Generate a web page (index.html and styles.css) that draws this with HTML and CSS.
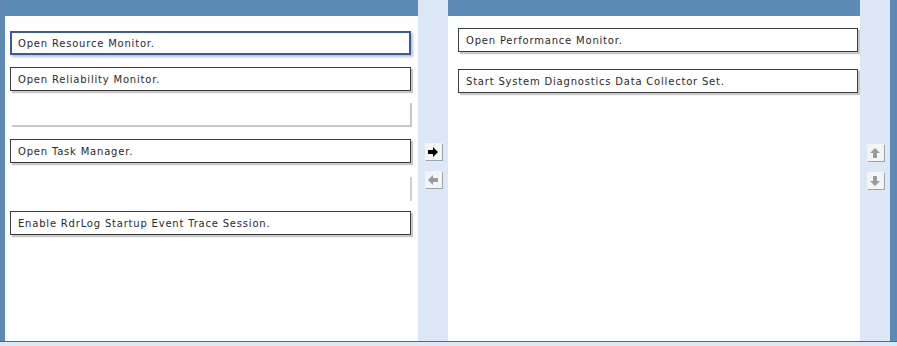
FILE: index.html
```html
<!DOCTYPE html>
<html>
<head>
<meta charset="utf-8">
<link rel="stylesheet" href="styles.css">
</head>
<body>
<div class="frame">
  <div class="cols">
    <div class="panel left">
      <div class="head"></div>
      <div class="list left-list">
        <div class="item focused">Open Resource Monitor.</div>
        <div class="item">Open Reliability Monitor.</div>
        <div class="item ghost"></div>
        <div class="item">Open Task Manager.</div>
        <div class="item ghost2"></div>
        <div class="item">Enable RdrLog Startup Event Trace Session.</div>
      </div>
    </div>
    <div class="gutter mid">
      <div class="btn">
        <svg width="12" height="12" viewBox="0 0 12 12"><path d="M1 4h5V1l5 5-5 5V8H1z" fill="#000"/></svg>
      </div>
      <div class="btn">
        <svg width="12" height="12" viewBox="0 0 12 12"><path d="M11 4H6V1L1 6l5 5V8h5z" fill="#9a9a9a"/></svg>
      </div>
    </div>
    <div class="panel right">
      <div class="head"></div>
      <div class="list right-list">
        <div class="item">Open Performance Monitor.</div>
        <div class="item">Start System Diagnostics Data Collector Set.</div>
      </div>
    </div>
    <div class="gutter side">
      <div class="btn">
        <svg width="12" height="12" viewBox="0 0 12 12"><path d="M4 11V6H1l5-5 5 5H8v5z" fill="#9a9a9a"/></svg>
      </div>
      <div class="btn">
        <svg width="12" height="12" viewBox="0 0 12 12"><path d="M4 1v5H1l5 5 5-5H8V1z" fill="#9a9a9a"/></svg>
      </div>
    </div>
  </div>
  <div class="foot"></div>
</div>
</body>
</html>
```
FILE: styles.css
```css
html, body {
  margin: 0;
  padding: 0;
  background: #dce8f5;
}
.frame {
  width: 897px;
  height: 346px;
  display: flex;
  flex-direction: column;
  font-family: "DejaVu Sans", Verdana, sans-serif;
  font-size: 10px;
  letter-spacing: 0.8px;
  color: #2a2a2a;
}
.cols {
  display: flex;
  height: 341px;
  border-left: 5px solid #5d89b3;
  border-right: 7px solid #5d89b3;
  box-shadow: inset -1px 0 0 #3f6a96;
}
.foot {
  height: 5px;
  border-top: 1px solid #556a80;
  background: #dce8f5;
  box-sizing: border-box;
}
.panel {
  display: flex;
  flex-direction: column;
  background: #fff;
}
.panel.left { width: 413px; }
.panel.right { width: 412px; }
.head {
  height: 16px;
  background: #5b8bb6;
}
.list {
  display: flex;
  flex-direction: column;
  padding-left: 5px;
}
.left-list {
  padding-top: 15px;
  gap: 12px;
}
.right-list {
  padding-top: 12px;
  padding-left: 10px;
  gap: 17px;
}
.item {
  box-sizing: border-box;
  height: 24px;
  width: 401px;
  border: 1px solid #3a3a3a;
  background: #fff;
  padding-left: 7px;
  padding-top: 1px;
  line-height: 22px;
  box-shadow: 2px 2px 1px #c8c8c8;
}
.right-list .item { width: 400px; }
.item.focused {
  border: 2px solid #3d5b9a;
  padding-left: 6px;
  line-height: 20px;
  box-shadow: 2px 2px 2px #b8c4dc;
}
.item.ghost {
  border: none;
  margin-left: 2px;
  width: 400px;
  border-right: 2px solid #c8c8c8;
  border-bottom: 2px solid #c8c8c8;
  box-shadow: none;
  height: 24px;
}
.item.ghost2 {
  border: none;
  width: 402px;
  box-shadow: none;
  border-right: 2px solid #d0d0d0;
  height: 24px;
  margin-top: 2px;
  margin-bottom: -2px;
}
.gutter {
  width: 30px;
  background: #dce8f5;
  display: flex;
  flex-direction: column;
  align-items: center;
  gap: 11px;
}
.gutter.mid { padding-top: 143px; }
.gutter.side { padding-top: 144px; }
.btn {
  width: 17px;
  height: 17px;
  background: #f2f4f6;
  box-shadow: 1px 1px 0 #9aa4ae;
  display: flex;
  align-items: center;
  justify-content: center;
}
```
